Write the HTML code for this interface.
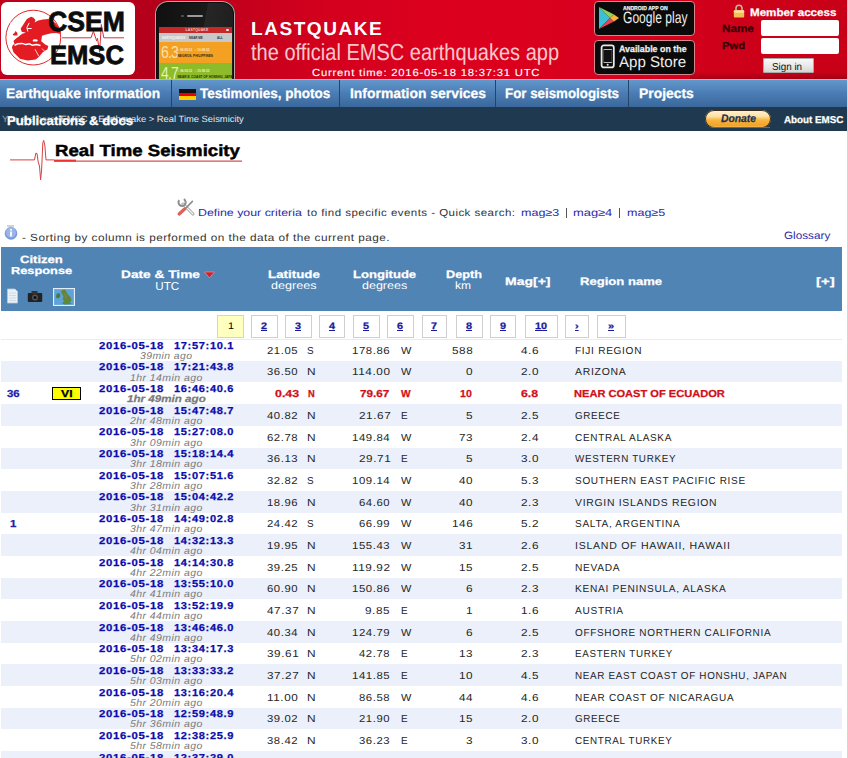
<!DOCTYPE html>
<html><head><meta charset="utf-8"><title>Real Time Seismicity</title>
<style>
html,body{margin:0;padding:0}
body{width:848px;height:758px;overflow:hidden;position:relative;background:#fff;font-family:"Liberation Sans",sans-serif}
.a{position:absolute}
.t{position:absolute;white-space:nowrap;line-height:normal;text-rendering:geometricPrecision;font-family:"Liberation Sans", sans-serif} .bm{display:inline-block;width:0;height:0}
#hdr{left:0;top:0;width:847px;height:79px;background:linear-gradient(to right,#c0001a 0px,#b4001a 150px,#c4001c 240px,#d4001e 330px,#dc001e 450px,#d8001e 600px,#cf001a 720px,#c80018 846px)}
#pinkline{left:0;top:79px;width:847px;height:1px;background:#e7a1aa}
#logo{left:1px;top:2px;width:134px;height:73px;background:#fff;border-radius:6px}
#nav{left:0;top:80px;width:847px;height:27px;background:linear-gradient(#6398cc,#4a7cb3 50%,#3a689c)}
.sep{top:80px;width:1px;height:27px;background:#22456c}
#bar{left:0;top:107px;width:847px;height:24px;background:#1f3a50}
#rborder{left:847px;top:0;width:1px;height:758px;background:linear-gradient(#efc4ca 0,#efc4ca 79px,#cdd6e2 79px)}
#thead{left:1px;top:247px;width:841px;height:64px;background:#5084b5}
.row{left:1px;width:841px;height:21.68px;background:#ebf0fa}
.pg{top:314.5px;height:22px;border:1px solid #cfcfcf;background:#fff;box-sizing:border-box;height:23.3px}
</style></head><body>
<div id="hdr" class="a"></div>
<div id="pinkline" class="a"></div>
<div class="a" style="left:690px;top:72px;width:157px;height:7px;background:linear-gradient(rgba(90,0,10,0),rgba(90,0,10,0.35))"></div>
<div id="logo" class="a"></div>
<svg class="a" style="left:0;top:0" width="848" height="80" viewBox="0 0 848 80">
  <circle cx="33.3" cy="37.6" r="27.4" fill="none" stroke="#e0262a" stroke-width="1"/>
  <path fill="#e31b23" d="M31.1,16.7 L33.5,17.8 L35.5,20 L34.5,22.5 L38.2,20.5 L43,19.5 L48,19.1 L52,20.5 L56,23.5 L59.4,28.6 L61,34 L56,33 L51.5,33.3 L46,34.5 L42,35.7 L41.2,41.2 L45.2,44.4 L48.3,46 L47.5,49.2 L42.8,52.3 L38.8,57.1 L35.7,59.5 L27.7,60.6 L19.8,58.7 L13.5,52.3 L11.9,47.6 L12.7,45.2 L14.5,43.8 L13.5,41.2 L14.1,40.3 L16,38.5 L18.8,36.5 L22.2,33.7 L25.9,32.8 L21.7,31.8 L20.7,28.5 L22.2,26.2 L26.9,19.1 Z"/>
  <path fill="#e31b23" d="M15.5,30.9 L17.4,33 L17.4,35.6 L13.5,35.5 L12.7,34.2 L14.5,33 Z"/>
  <path fill="none" stroke="#fff" stroke-width="1" d="M29.2,22.8 L26.9,27.6 L27.8,31.5 M27.2,28.5 L31.6,28.5"/>
  <path fill="none" stroke="#fff" stroke-width="1.5" stroke-linejoin="round" d="M14.5,45.2 L18,43.8 L22,43.4 L26,44.6 L29.5,43.8 L32.5,45.3 L36.5,44.6 L40.5,45.6"/>
  <ellipse cx="35.2" cy="40.4" rx="2.6" ry="1.2" fill="#fff"/>
  
  <path fill="none" stroke="#fff" stroke-width="0.8" d="M35,49.2 L38.8,56.3 M42,48.6 L44.6,51.2"/>
  <path fill="none" stroke="#fff" stroke-width="0.8" d="M9.5,22.5 L11,23.5"/>
  <polyline fill="none" stroke="#d6343a" stroke-width="1" points="62,37.8 91,37.8 93.4,31.2 96.7,41.1 97.5,38.2 99.6,52.3 101.3,24.5 103.8,37.8 124,37.8"/>
</svg>
<!-- phone -->
<div class="a" style="left:155px;top:1px;width:80px;height:90px;border-radius:13px;background:#0c0c0c;box-shadow:0 0 0 1px #b9a4a6 inset"></div>
<div class="a" style="left:157px;top:3px;width:76px;height:90px;border-radius:11px;background:linear-gradient(100deg,#101010 0%,#1a1a1a 55%,#262626 56%,#1c1c1c 100%)"></div>
<div class="a" style="left:187px;top:14.5px;width:15.5px;height:2.5px;border-radius:2px;background:#9a9a9a"></div>
<div class="a" style="left:181px;top:14.5px;width:2.5px;height:2.5px;border-radius:50%;background:#555"></div>
<div class="a" style="left:159px;top:26.5px;width:73px;height:52.5px;overflow:hidden;font-family:'Liberation Sans',sans-serif;white-space:nowrap">
<div class="a" style="left:0;top:0;width:73px;height:7px;background:#c42828"></div>
<div class="a" style="left:0;top:6.9px;width:73px;height:8.6px;background:#c8c8c8"></div>
<div class="a" style="left:0;top:15.5px;width:73px;height:21.2px;background:#f3a023"></div>
<div class="a" style="left:0;top:36.7px;width:73px;height:16px;background:#8dbb2a"></div>
<div class="a" style="left:26.5px;top:1.7px;font:bold 3.4px/4px 'Liberation Sans',sans-serif;color:#f3caca;letter-spacing:0.2px">LASTQUAKE</div>
<div class="a" style="left:67px;top:2.1px;width:2.6px;height:2.6px;border-radius:50%;background:#eee"></div>
<div class="a" style="left:3px;top:9px;font:bold 3px/4px 'Liberation Sans',sans-serif;color:#f4f4f4">EARTHQUAKES</div>
<div class="a" style="left:30px;top:9px;font:bold 3px/4px 'Liberation Sans',sans-serif;color:#333">NEAR ME</div>
<div class="a" style="left:58px;top:9px;font:bold 3px/4px 'Liberation Sans',sans-serif;color:#333">ALL</div>
<div class="a" style="left:1.8px;top:17px;font:16.5px/16px 'Liberation Sans',sans-serif;color:#fde8b8;letter-spacing:-1px;transform:scaleX(0.85);transform-origin:0 0;opacity:0.9">6.3</div>
<div class="a" style="left:18.5px;top:21.8px;font:bold 3px/4px 'Liberation Sans',sans-serif;color:#fde8c0">&#9675; 06:05:12 &nbsp; &#9675; 10:08:32</div>
<div class="a" style="left:18.5px;top:27.3px;font:bold 3.2px/4px 'Liberation Sans',sans-serif;color:#3a2408">NEGROS, PHILIPPINES</div>
<div class="a" style="left:1.8px;top:38px;font:16.5px/16px 'Liberation Sans',sans-serif;color:#eef9c8;letter-spacing:-1px;transform:scaleX(0.85);transform-origin:0 0;opacity:0.9">4.7</div>
<div class="a" style="left:18.5px;top:42.8px;font:bold 3px/4px 'Liberation Sans',sans-serif;color:#e8f4d0">&#9675; 06:05:12 &nbsp; &#9675; 10:08:32</div>
<div class="a" style="left:18.5px;top:48.3px;font:bold 3.2px/4px 'Liberation Sans',sans-serif;color:#283008">NEAR E. COAST OF HONSHU, JAPAN</div>
</div>
<div class="a" style="left:155px;top:79px;width:80px;height:1px;background:#e7a1aa"></div>
<!-- badges -->
<div class="a" style="left:594px;top:1px;width:99px;height:32.6px;border-radius:4px;background:#0a0a0a;border:1px solid #d7868e"></div>
<div class="a" style="left:594px;top:40px;width:99px;height:32.6px;border-radius:4px;background:#0a0a0a;border:1px solid #d7868e"></div>
<svg class="a" style="left:596px;top:5px" width="26" height="26" viewBox="0 0 26 26">
  <path d="M3,2 L14,13 L3,24 Z" fill="#3bc0d8"/>
  <path d="M3,2 L14,13 L18,9.5 Z" fill="#8fd25a"/>
  <path d="M3,24 L14,13 L18,16.5 Z" fill="#e2455a"/>
  <path d="M14,13 L18,9.5 L23,13 L18,16.5 Z" fill="#f6b53b"/>
</svg>
<svg class="a" style="left:600px;top:44px" width="16" height="25" viewBox="0 0 16 25">
  <rect x="1.6" y="1.4" width="12.2" height="22" rx="2.2" fill="none" stroke="#e8e8e8" stroke-width="1.8"/>
  <rect x="3.6" y="5" width="8.2" height="13.8" fill="#e8e8e8"/>
  <rect x="3.6" y="5.8" width="8.2" height="12.2" fill="#111"/>
  <circle cx="7.7" cy="20.8" r="1" fill="#e8e8e8"/>
</svg>
<!-- member access -->
<svg class="a" style="left:733px;top:4px" width="12" height="14" viewBox="0 0 12 14">
  <path d="M3,6.5 V4.2 A3,3 0 0 1 9,4.2 V6.5" fill="none" stroke="#c9b8a0" stroke-width="1.6"/>
  <rect x="0.8" y="6.2" width="10.4" height="7.2" rx="1" fill="#f2c055"/>
  <rect x="0.8" y="6.2" width="10.4" height="2.6" rx="1" fill="#fde39a"/>
</svg>
<div class="a" style="left:760.8px;top:20px;width:78px;height:15.8px;background:#fff;border-radius:2px"></div>
<div class="a" style="left:760.8px;top:38.4px;width:78px;height:15.7px;background:#fff;border-radius:2px"></div>
<div class="a" style="left:762.5px;top:57.7px;width:51px;height:15.2px;border-radius:2px;background:linear-gradient(#fafafa,#e6e6e6 60%,#d2d2d2);box-shadow:0 0 0 1px #a9a9a9 inset;box-sizing:border-box"></div>
<!-- nav -->
<div id="nav" class="a"></div>
<div class="a sep" style="left:170.5px"></div>
<div class="a sep" style="left:339px"></div>
<div class="a sep" style="left:495px"></div>
<div class="a sep" style="left:628px"></div>
<div class="a" style="left:179px;top:89.4px;width:16.5px;height:10.6px;background:linear-gradient(#111 0,#111 33.3%,#e4000f 33.3%,#e4000f 66.6%,#ffcc00 66.6%)"></div>
<div id="bar" class="a"></div>
<div class="a" style="left:705px;top:110px;width:66px;height:17.5px;border-radius:9px;background:linear-gradient(#fff3d6 0%,#ffe2a6 35%,#f8b640 55%,#f2a32a 85%,#f8c060 100%);box-shadow:0 0 0 1px #3a3020 inset"></div>
<div class="a" style="left:712px;top:127px;width:58px;height:1px;background:#6b6b66"></div>
<div id="rborder" class="a"></div>
<!-- title graph -->
<svg class="a" style="left:0;top:130px" width="260" height="60" viewBox="0 130 260 60">
  <polyline fill="none" stroke="#d84040" stroke-width="1" points="10,159.9 34.5,159.9 35.8,153.2 37,153.5 38.2,162 39.5,166 40.6,179.8 41.6,170 42.8,143 43.7,140.4 44.8,145 46,159.9 54,159.9"/>
  <line x1="54" y1="161.1" x2="242" y2="161.1" stroke="#c0282e" stroke-width="1"/>
  <line x1="54" y1="160.6" x2="76" y2="160.6" stroke="#e33" stroke-width="2"/>
</svg>
<!-- wrench icon -->
<svg class="a" style="left:177px;top:197px" width="18" height="20" viewBox="0 0 18 20">
  <path d="M6,7 L16,17" stroke="#9a9a9a" stroke-width="3" stroke-linecap="round"/>
  <path d="M6,7 L16,17" stroke="#f4f4f4" stroke-width="1.4" stroke-linecap="round"/>
  <path d="M2.2,3.2 A3.6,3.6 0 1 0 6.8,2.2" fill="none" stroke="#8d8d8d" stroke-width="2"/>
  <path d="M8,12 L15.4,4.4" stroke="#8a8a8a" stroke-width="1.6" stroke-linecap="round"/>
  <path d="M2.2,17 L7.6,12" stroke="#e0605a" stroke-width="3.2" stroke-linecap="round"/>
</svg>
<!-- info icon -->
<svg class="a" style="left:4px;top:225px" width="15" height="16" viewBox="0 0 15 16">
  <rect x="3" y="0.5" width="7" height="1" fill="#9aa"/>
  <circle cx="7" cy="8.4" r="6.3" fill="#7a9ad8"/>
  <circle cx="7" cy="7.6" r="5" fill="#9bb5ea"/>
  <rect x="6.1" y="6.5" width="1.8" height="5" fill="#fff"/>
  <circle cx="7" cy="4.8" r="1" fill="#fff"/>
</svg>
<div id="thead" class="a"></div>
<!-- header icons -->
<svg class="a" style="left:6px;top:288px" width="13" height="16" viewBox="0 0 13 16">
  <path d="M1.5,1 H9 L11.5,3.5 V15 H1.5 Z" fill="#e9f0f8" stroke="#b8c8d8" stroke-width="0.8"/>
  <path d="M3,5 H10 M3,7.5 H10 M3,10 H10 M3,12.5 H10" stroke="#c8d4e0" stroke-width="0.8"/>
</svg>
<svg class="a" style="left:27px;top:290px" width="16" height="13" viewBox="0 0 16 13">
  <rect x="0.8" y="3" width="14.4" height="9" rx="1" fill="#222"/>
  <rect x="4.5" y="1" width="6" height="3" fill="#333"/>
  <circle cx="8" cy="7.5" r="3" fill="#555"/>
  <circle cx="8" cy="7.5" r="1.6" fill="#111"/>
</svg>
<svg class="a" style="left:53px;top:288px" width="22" height="18" viewBox="0 0 22 18">
  <rect x="0.5" y="0.5" width="21" height="17" fill="#5fa3dd" stroke="#e6eef8" stroke-width="1.2"/>
  <path d="M9,2 L12,1.6 L13.5,4 L15,6.5 L17.5,9 L18.5,12 L17,14.5 L19,16 L12,16.4 L9,15.5 L11,13 L9.5,11 L10.5,8.5 L9,6 L8,4 Z" fill="#5c8a3a"/>
  <path d="M11,4 L13,6 L14.5,9 L13,11.5 L12,9 Z" fill="#8a7a48"/>
  <path d="M3.5,6 L6.5,5 L7.5,8 L5.5,10.5 L3,9.5 Z" fill="#4d7a38"/>
</svg>
<svg class="a" style="left:203px;top:271px" width="13" height="8" viewBox="0 0 13 8">
  <path d="M1.5,1 H11.5 L6.5,6.8 Z" fill="#d0202a" stroke="#e8a0b0" stroke-width="0.6"/>
</svg>
<!-- pagination -->
<div class="a pg" style="left:217.3px;width:26.4px;background:#ffffc0;border-color:#d8d8b0"></div>
<div class="a pg" style="left:251px;width:27px"></div>
<div class="a pg" style="left:285.2px;width:26.5px"></div>
<div class="a pg" style="left:319px;width:26.4px"></div>
<div class="a pg" style="left:353.2px;width:26.7px"></div>
<div class="a pg" style="left:386.9px;width:26.7px"></div>
<div class="a pg" style="left:422.2px;width:25.2px"></div>
<div class="a pg" style="left:456.1px;width:26.6px"></div>
<div class="a pg" style="left:490px;width:26.3px"></div>
<div class="a pg" style="left:524.5px;width:33.3px"></div>
<div class="a pg" style="left:565.1px;width:24.4px"></div>
<div class="a pg" style="left:597.1px;width:28.5px"></div>
<div class="a" style="left:1px;top:339px;width:841px;height:1px;background:#ececec"></div>
<div class="a row" style="top:360.78px"></div><div class="a row" style="top:404.14px"></div><div class="a row" style="top:447.50px"></div><div class="a row" style="top:490.86px"></div><div class="a row" style="top:534.22px"></div><div class="a row" style="top:577.58px"></div><div class="a row" style="top:620.94px"></div><div class="a row" style="top:664.30px"></div><div class="a row" style="top:707.66px"></div><div class="a row" style="top:751.02px"></div>
<div class="a" style="left:52px;top:387.1px;width:29px;height:12.7px;background:#ffff00;border:1px solid #000;box-sizing:border-box"></div>
<div class="a" style="left:566px;top:208px;width:1px;height:10px;background:#555"></div>
<div class="a" style="left:619px;top:208px;width:1px;height:10px;background:#555"></div>
<div id="t0" class="t" style="left:47.90px;top:5.50px;font-size:27.62px;font-weight:bold;font-style:normal;color:#0c0c0c;transform:scaleX(0.9633);transform-origin:0 0;-webkit-text-stroke:0.8px #0c0c0c">CSEM<span class="bm"></span></div><div id="t1" class="t" style="left:49.50px;top:39.60px;font-size:26.45px;font-weight:bold;font-style:normal;color:#0c0c0c;transform:scaleX(0.9675);transform-origin:0 0;-webkit-text-stroke:0.8px #0c0c0c">EMSC<span class="bm"></span></div><div id="t2" class="t" style="left:251.20px;top:17.90px;font-size:18.75px;font-weight:bold;font-style:normal;color:#fff;transform:scaleX(1.0163);transform-origin:0 0;letter-spacing:1.5px">LASTQUAKE<span class="bm"></span></div><div id="t3" class="t" style="left:251.20px;top:39.00px;font-size:23.26px;font-weight:normal;font-style:normal;color:rgba(255,236,236,0.86);transform:scaleX(0.8616);transform-origin:0 0;">the official EMSC earthquakes app<span class="bm"></span></div><div id="t4" class="t" style="left:312.20px;top:68.20px;font-size:10.17px;font-weight:normal;font-style:normal;color:#fff;transform:scaleX(1.1112);transform-origin:0 0;letter-spacing:0.7px;-webkit-text-stroke:0.1px #fff">Current time: 2016-05-18 18:37:31 UTC<span class="bm"></span></div><div id="t5" class="t" style="left:749.50px;top:7.00px;font-size:10.76px;font-weight:bold;font-style:normal;color:#fff;transform:scaleX(1.0787);transform-origin:0 0;-webkit-text-stroke:0.25px #fff;">Member access<span class="bm"></span></div><div id="t6" class="t" style="left:721.60px;top:24.20px;font-size:10.47px;font-weight:bold;font-style:normal;color:#360006;transform:scaleX(1.1138);transform-origin:0 0;-webkit-text-stroke:0.25px #360006;">Name<span class="bm"></span></div><div id="t7" class="t" style="left:721.60px;top:41.00px;font-size:10.17px;font-weight:bold;font-style:normal;color:#360006;transform:scaleX(1.1048);transform-origin:0 0;-webkit-text-stroke:0.25px #360006;">Pwd<span class="bm"></span></div><div id="t8" class="t" style="left:772.00px;top:61.50px;font-size:10.17px;font-weight:normal;font-style:normal;color:#111;transform:scaleX(0.9677);transform-origin:0 0;">Sign in<span class="bm"></span></div><div id="t9" class="t" style="left:623.20px;top:5.60px;font-size:5.67px;font-weight:bold;font-style:normal;color:#eee;transform:scaleX(0.9060);transform-origin:0 0;-webkit-text-stroke:0.25px #eee;">ANDROID APP ON<span class="bm"></span></div><div id="t10" class="t" style="left:623.20px;top:9.30px;font-size:16.42px;font-weight:normal;font-style:normal;color:#eee;transform:scaleX(0.7364);transform-origin:0 0;">Google play<span class="bm"></span></div><div id="t11" class="t" style="left:619.00px;top:44.40px;font-size:9.30px;font-weight:bold;font-style:normal;color:#eee;transform:scaleX(0.9521);transform-origin:0 0;-webkit-text-stroke:0.25px #eee;">Available on the<span class="bm"></span></div><div id="t12" class="t" style="left:619.00px;top:53.50px;font-size:15.41px;font-weight:normal;font-style:normal;color:#eee;transform:scaleX(0.9797);transform-origin:0 0;">App Store<span class="bm"></span></div><div id="t13" class="t" style="left:6.40px;top:84.80px;font-size:13.81px;font-weight:bold;font-style:normal;color:#fff;transform:scaleX(0.9955);transform-origin:0 0;-webkit-text-stroke:0.25px #fff;">Earthquake information<span class="bm"></span></div><div id="t14" class="t" style="left:199.60px;top:84.80px;font-size:13.81px;font-weight:bold;font-style:normal;color:#fff;transform:scaleX(0.9789);transform-origin:0 0;-webkit-text-stroke:0.25px #fff;">Testimonies, photos<span class="bm"></span></div><div id="t15" class="t" style="left:349.70px;top:84.80px;font-size:13.81px;font-weight:bold;font-style:normal;color:#fff;transform:scaleX(1.0074);transform-origin:0 0;-webkit-text-stroke:0.25px #fff;">Information services<span class="bm"></span></div><div id="t16" class="t" style="left:504.90px;top:84.80px;font-size:13.81px;font-weight:bold;font-style:normal;color:#fff;transform:scaleX(0.9653);transform-origin:0 0;-webkit-text-stroke:0.25px #fff;">For seismologists<span class="bm"></span></div><div id="t17" class="t" style="left:638.60px;top:84.80px;font-size:13.81px;font-weight:bold;font-style:normal;color:#fff;transform:scaleX(1.0056);transform-origin:0 0;-webkit-text-stroke:0.25px #fff;">Projects<span class="bm"></span></div><div id="t18" class="t" style="left:1.70px;top:114.20px;font-size:9.01px;font-weight:normal;font-style:normal;color:#e4e8ee;transform:scaleX(1.0408);transform-origin:0 0;"><span style="color:#9aa4ae">You are here:</span> EMSC &gt; Earthquake &gt; Real Time Seismicity<span class="bm"></span></div><div id="t19" class="t" style="left:7.40px;top:113.60px;font-size:12.65px;font-weight:bold;font-style:normal;color:#fff;transform:scaleX(1.0438);transform-origin:0 0;-webkit-text-stroke:0.25px #fff;">Publications &amp; docs<span class="bm"></span></div><div id="t20" class="t" style="left:721.20px;top:113.00px;font-size:10.90px;font-weight:bold;font-style:italic;color:#1d3356;transform:scaleX(0.9486);transform-origin:0 0;-webkit-text-stroke:0.25px #1d3356;">Donate<span class="bm"></span></div><div id="t21" class="t" style="left:783.80px;top:115.00px;font-size:9.88px;font-weight:bold;font-style:normal;color:#fff;transform:scaleX(0.9917);transform-origin:0 0;-webkit-text-stroke:0.25px #fff;">About EMSC<span class="bm"></span></div><div id="t22" class="t" style="left:55.20px;top:142.40px;font-size:16.13px;font-weight:bold;font-style:normal;color:#000;transform:scaleX(1.1559);transform-origin:0 0;-webkit-text-stroke:0.45px #000">Real Time Seismicity<span class="bm"></span></div><div id="t23" class="t" style="left:197.70px;top:208.00px;font-size:10.17px;font-weight:normal;font-style:normal;color:#2b2ba8;transform:scaleX(1.2176);transform-origin:0 0;">Define your criteria<span class="bm"></span></div><div id="t24" class="t" style="left:306.80px;top:208.00px;font-size:10.17px;font-weight:normal;font-style:normal;color:#333;transform:scaleX(1.1339);transform-origin:0 0;letter-spacing:0.4px">to find specific events - Quick search:<span class="bm"></span></div><div id="t25" class="t" style="left:521.20px;top:208.00px;font-size:10.17px;font-weight:normal;font-style:normal;color:#2b2ba8;transform:scaleX(1.2323);transform-origin:0 0;">mag≥3<span class="bm"></span></div><div id="t26" class="t" style="left:573.20px;top:208.00px;font-size:10.17px;font-weight:normal;font-style:normal;color:#2b2ba8;transform:scaleX(1.2677);transform-origin:0 0;">mag≥4<span class="bm"></span></div><div id="t27" class="t" style="left:626.90px;top:208.00px;font-size:10.17px;font-weight:normal;font-style:normal;color:#2b2ba8;transform:scaleX(1.2323);transform-origin:0 0;">mag≥5<span class="bm"></span></div><div id="t28" class="t" style="left:22.30px;top:233.10px;font-size:10.32px;font-weight:normal;font-style:normal;color:#333;transform:scaleX(1.1436);transform-origin:0 0;letter-spacing:0.4px">- Sorting by column is performed on the data of the current page.<span class="bm"></span></div><div id="t29" class="t" style="left:784.30px;top:230.00px;font-size:10.61px;font-weight:normal;font-style:normal;color:#2b2ba8;transform:scaleX(1.1048);transform-origin:0 0;">Glossary<span class="bm"></span></div><div id="t30" class="t" style="left:19.50px;top:254.70px;font-size:10.47px;font-weight:bold;font-style:normal;color:#fff;transform:scaleX(1.2457);transform-origin:0 0;-webkit-text-stroke:0.25px #fff;">Citizen<span class="bm"></span></div><div id="t31" class="t" style="left:10.60px;top:265.90px;font-size:10.03px;font-weight:bold;font-style:normal;color:#fff;transform:scaleX(1.2771);transform-origin:0 0;-webkit-text-stroke:0.25px #fff;">Response<span class="bm"></span></div><div id="t32" class="t" style="left:120.60px;top:268.70px;font-size:10.90px;font-weight:bold;font-style:normal;color:#fff;transform:scaleX(1.2587);transform-origin:0 0;-webkit-text-stroke:0.25px #fff;">Date &amp; Time<span class="bm"></span></div><div id="t33" class="t" style="left:155.30px;top:280.00px;font-size:11.63px;font-weight:normal;font-style:normal;color:#fff;">UTC<span class="bm"></span></div><div id="t34" class="t" style="left:267.60px;top:268.70px;font-size:10.76px;font-weight:bold;font-style:normal;color:#fff;transform:scaleX(1.2405);transform-origin:0 0;-webkit-text-stroke:0.25px #fff;">Latitude<span class="bm"></span></div><div id="t35" class="t" style="left:271.40px;top:280.10px;font-size:10.76px;font-weight:normal;font-style:normal;color:#fff;transform:scaleX(1.1692);transform-origin:0 0;">degrees<span class="bm"></span></div><div id="t36" class="t" style="left:352.80px;top:268.70px;font-size:10.76px;font-weight:bold;font-style:normal;color:#fff;transform:scaleX(1.2154);transform-origin:0 0;-webkit-text-stroke:0.25px #fff;">Longitude<span class="bm"></span></div><div id="t37" class="t" style="left:361.70px;top:280.10px;font-size:10.76px;font-weight:normal;font-style:normal;color:#fff;transform:scaleX(1.1615);transform-origin:0 0;">degrees<span class="bm"></span></div><div id="t38" class="t" style="left:445.80px;top:268.70px;font-size:10.76px;font-weight:bold;font-style:normal;color:#fff;transform:scaleX(1.1806);transform-origin:0 0;-webkit-text-stroke:0.25px #fff;">Depth<span class="bm"></span></div><div id="t39" class="t" style="left:455.30px;top:280.10px;font-size:10.76px;font-weight:normal;font-style:normal;color:#fff;transform:scaleX(1.1200);transform-origin:0 0;">km<span class="bm"></span></div><div id="t40" class="t" style="left:504.80px;top:275.60px;font-size:10.76px;font-weight:bold;font-style:normal;color:#fff;transform:scaleX(1.3029);transform-origin:0 0;-webkit-text-stroke:0.25px #fff;">Mag[+]<span class="bm"></span></div><div id="t41" class="t" style="left:579.50px;top:275.60px;font-size:10.76px;font-weight:bold;font-style:normal;color:#fff;transform:scaleX(1.2162);transform-origin:0 0;-webkit-text-stroke:0.25px #fff;">Region name<span class="bm"></span></div><div id="t42" class="t" style="left:815.90px;top:275.60px;font-size:10.76px;font-weight:bold;font-style:normal;color:#fff;transform:scaleX(1.3857);transform-origin:0 0;-webkit-text-stroke:0.25px #fff;">[+]<span class="bm"></span></div><div id="t43" class="t" style="left:227.62px;top:320.80px;font-size:9.45px;font-weight:normal;font-style:normal;color:#000;transform:scaleX(1.1500);transform-origin:0 0;">1<span class="bm"></span></div><div id="t44" class="t" style="left:261.05px;top:320.80px;font-size:9.45px;font-weight:bold;font-style:normal;color:#1a1a9e;transform:scaleX(1.1500);transform-origin:0 0;-webkit-text-stroke:0.25px #1a1a9e;text-decoration:underline">2<span class="bm"></span></div><div id="t45" class="t" style="left:294.95px;top:320.80px;font-size:9.45px;font-weight:bold;font-style:normal;color:#1a1a9e;transform:scaleX(1.1500);transform-origin:0 0;-webkit-text-stroke:0.25px #1a1a9e;text-decoration:underline">3<span class="bm"></span></div><div id="t46" class="t" style="left:328.75px;top:320.80px;font-size:9.45px;font-weight:bold;font-style:normal;color:#1a1a9e;transform:scaleX(1.1500);transform-origin:0 0;-webkit-text-stroke:0.25px #1a1a9e;text-decoration:underline">4<span class="bm"></span></div><div id="t47" class="t" style="left:363.05px;top:320.80px;font-size:9.45px;font-weight:bold;font-style:normal;color:#1a1a9e;transform:scaleX(1.1500);transform-origin:0 0;-webkit-text-stroke:0.25px #1a1a9e;text-decoration:underline">5<span class="bm"></span></div><div id="t48" class="t" style="left:396.75px;top:320.80px;font-size:9.45px;font-weight:bold;font-style:normal;color:#1a1a9e;transform:scaleX(1.1500);transform-origin:0 0;-webkit-text-stroke:0.25px #1a1a9e;text-decoration:underline">6<span class="bm"></span></div><div id="t49" class="t" style="left:431.35px;top:320.80px;font-size:9.45px;font-weight:bold;font-style:normal;color:#1a1a9e;transform:scaleX(1.1500);transform-origin:0 0;-webkit-text-stroke:0.25px #1a1a9e;text-decoration:underline">7<span class="bm"></span></div><div id="t50" class="t" style="left:465.95px;top:320.80px;font-size:9.45px;font-weight:bold;font-style:normal;color:#1a1a9e;transform:scaleX(1.1500);transform-origin:0 0;-webkit-text-stroke:0.25px #1a1a9e;text-decoration:underline">8<span class="bm"></span></div><div id="t51" class="t" style="left:499.65px;top:320.80px;font-size:9.45px;font-weight:bold;font-style:normal;color:#1a1a9e;transform:scaleX(1.1500);transform-origin:0 0;-webkit-text-stroke:0.25px #1a1a9e;text-decoration:underline">9<span class="bm"></span></div><div id="t52" class="t" style="left:534.77px;top:320.80px;font-size:9.45px;font-weight:bold;font-style:normal;color:#1a1a9e;transform:scaleX(1.1500);transform-origin:0 0;-webkit-text-stroke:0.25px #1a1a9e;text-decoration:underline">10<span class="bm"></span></div><div id="t53" class="t" style="left:575.00px;top:320.80px;font-size:9.45px;font-weight:bold;font-style:normal;color:#1a1a9e;transform:scaleX(1.1500);transform-origin:0 0;-webkit-text-stroke:0.25px #1a1a9e;text-decoration:underline">›<span class="bm"></span></div><div id="t54" class="t" style="left:607.85px;top:320.80px;font-size:9.45px;font-weight:bold;font-style:normal;color:#1a1a9e;transform:scaleX(1.1500);transform-origin:0 0;-webkit-text-stroke:0.25px #1a1a9e;text-decoration:underline">»<span class="bm"></span></div><div id="t55" class="t" style="left:99.00px;top:340.70px;font-size:10.03px;font-weight:bold;font-style:normal;color:#0c0cac;transform:scaleX(1.1351);transform-origin:0 0;-webkit-text-stroke:0.25px #0c0cac;letter-spacing:0.6px">2016-05-18<span class="bm"></span></div><div id="t56" class="t" style="left:173.80px;top:340.70px;font-size:10.03px;font-weight:bold;font-style:normal;color:#0c0cac;transform:scaleX(1.1037);transform-origin:0 0;-webkit-text-stroke:0.25px #0c0cac;letter-spacing:0.6px">17:57:10.1<span class="bm"></span></div><div id="t57" class="t" style="left:140.15px;top:350.90px;font-size:9.88px;font-weight:normal;font-style:italic;color:#7a7a7a;transform:scaleX(1.0541);transform-origin:0 0;letter-spacing:0.4px">39min ago<span class="bm"></span></div><div id="t58" class="t" style="left:267.23px;top:345.80px;font-size:10.17px;font-weight:normal;font-style:normal;color:#262626;transform:scaleX(1.1134);transform-origin:0 0;letter-spacing:0.5px">21.05<span class="bm"></span></div><div id="t59" class="t" style="left:307.30px;top:345.80px;font-size:10.17px;font-weight:normal;font-style:normal;color:#262626;transform:scaleX(0.9810);transform-origin:0 0;">S<span class="bm"></span></div><div id="t60" class="t" style="left:351.55px;top:345.80px;font-size:10.17px;font-weight:normal;font-style:normal;color:#262626;transform:scaleX(1.1221);transform-origin:0 0;letter-spacing:0.5px">178.86<span class="bm"></span></div><div id="t61" class="t" style="left:401.10px;top:345.80px;font-size:10.17px;font-weight:normal;font-style:normal;color:#262626;transform:scaleX(1.0791);transform-origin:0 0;">W<span class="bm"></span></div><div id="t62" class="t" style="left:451.98px;top:345.80px;font-size:10.17px;font-weight:normal;font-style:normal;color:#262626;transform:scaleX(1.1566);transform-origin:0 0;letter-spacing:0.5px">588<span class="bm"></span></div><div id="t63" class="t" style="left:520.90px;top:345.80px;font-size:10.17px;font-weight:normal;font-style:normal;color:#262626;transform:scaleX(1.1554);transform-origin:0 0;letter-spacing:0.5px">4.6<span class="bm"></span></div><div id="t64" class="t" style="left:575.20px;top:345.80px;font-size:10.17px;font-weight:normal;font-style:normal;color:#262626;transform:scaleX(0.9950);transform-origin:0 0;letter-spacing:0.7px">FIJI REGION<span class="bm"></span></div><div id="t65" class="t" style="left:99.00px;top:362.38px;font-size:10.03px;font-weight:bold;font-style:normal;color:#0c0cac;transform:scaleX(1.1351);transform-origin:0 0;-webkit-text-stroke:0.25px #0c0cac;letter-spacing:0.6px">2016-05-18<span class="bm"></span></div><div id="t66" class="t" style="left:173.80px;top:362.38px;font-size:10.03px;font-weight:bold;font-style:normal;color:#0c0cac;transform:scaleX(1.1037);transform-origin:0 0;-webkit-text-stroke:0.25px #0c0cac;letter-spacing:0.6px">17:21:43.8<span class="bm"></span></div><div id="t67" class="t" style="left:130.33px;top:372.58px;font-size:9.88px;font-weight:normal;font-style:italic;color:#7a7a7a;transform:scaleX(1.0639);transform-origin:0 0;letter-spacing:0.4px">1hr 14min ago<span class="bm"></span></div><div id="t68" class="t" style="left:267.23px;top:367.48px;font-size:10.17px;font-weight:normal;font-style:normal;color:#262626;transform:scaleX(1.1134);transform-origin:0 0;letter-spacing:0.5px">36.50<span class="bm"></span></div><div id="t69" class="t" style="left:307.30px;top:367.48px;font-size:10.17px;font-weight:normal;font-style:normal;color:#262626;transform:scaleX(1.1679);transform-origin:0 0;">N<span class="bm"></span></div><div id="t70" class="t" style="left:351.55px;top:367.48px;font-size:10.17px;font-weight:normal;font-style:normal;color:#262626;transform:scaleX(1.1561);transform-origin:0 0;letter-spacing:0.5px">114.00<span class="bm"></span></div><div id="t71" class="t" style="left:401.10px;top:367.48px;font-size:10.17px;font-weight:normal;font-style:normal;color:#262626;transform:scaleX(1.0791);transform-origin:0 0;">W<span class="bm"></span></div><div id="t72" class="t" style="left:465.82px;top:367.48px;font-size:10.17px;font-weight:normal;font-style:normal;color:#262626;transform:scaleX(1.1627);transform-origin:0 0;letter-spacing:0.5px">0<span class="bm"></span></div><div id="t73" class="t" style="left:520.90px;top:367.48px;font-size:10.17px;font-weight:normal;font-style:normal;color:#262626;transform:scaleX(1.1554);transform-origin:0 0;letter-spacing:0.5px">2.0<span class="bm"></span></div><div id="t74" class="t" style="left:575.20px;top:367.48px;font-size:10.17px;font-weight:normal;font-style:normal;color:#262626;transform:scaleX(1.0306);transform-origin:0 0;letter-spacing:0.7px">ARIZONA<span class="bm"></span></div><div id="t75" class="t" style="left:99.00px;top:384.06px;font-size:10.03px;font-weight:bold;font-style:normal;color:#0c0cac;transform:scaleX(1.1351);transform-origin:0 0;-webkit-text-stroke:0.25px #0c0cac;letter-spacing:0.6px">2016-05-18<span class="bm"></span></div><div id="t76" class="t" style="left:173.80px;top:384.06px;font-size:10.03px;font-weight:bold;font-style:normal;color:#0c0cac;transform:scaleX(1.1037);transform-origin:0 0;-webkit-text-stroke:0.25px #0c0cac;letter-spacing:0.6px">16:46:40.6<span class="bm"></span></div><div id="t77" class="t" style="left:126.90px;top:394.26px;font-size:9.88px;font-weight:bold;font-style:italic;color:#7a7a7a;transform:scaleX(1.1761);transform-origin:0 0;-webkit-text-stroke:0.25px #7a7a7a;">1hr 49min ago<span class="bm"></span></div><div id="t78" class="t" style="left:6.56px;top:389.16px;font-size:10.17px;font-weight:bold;font-style:normal;color:#2020a8;transform:scaleX(1.1236);transform-origin:0 0;-webkit-text-stroke:0.25px #2020a8;">36<span class="bm"></span></div><div id="t79" class="t" style="left:60.50px;top:388.66px;font-size:10.17px;font-weight:bold;font-style:normal;color:#000;transform:scaleX(1.2000);transform-origin:0 0;-webkit-text-stroke:0.25px #000;">VI<span class="bm"></span></div><div id="t80" class="t" style="left:275.00px;top:389.16px;font-size:10.17px;font-weight:bold;font-style:normal;color:#d0101a;transform:scaleX(1.2200);transform-origin:0 0;-webkit-text-stroke:0.25px #d0101a;">0.43<span class="bm"></span></div><div id="t81" class="t" style="left:308.32px;top:389.16px;font-size:10.17px;font-weight:bold;font-style:normal;color:#d0101a;transform:scaleX(0.9200);transform-origin:0 0;-webkit-text-stroke:0.25px #d0101a;">N<span class="bm"></span></div><div id="t82" class="t" style="left:359.90px;top:389.16px;font-size:10.17px;font-weight:bold;font-style:normal;color:#d0101a;transform:scaleX(1.1462);transform-origin:0 0;-webkit-text-stroke:0.25px #d0101a;">79.67<span class="bm"></span></div><div id="t83" class="t" style="left:400.90px;top:389.16px;font-size:10.17px;font-weight:bold;font-style:normal;color:#d0101a;-webkit-text-stroke:0.25px #d0101a;">W<span class="bm"></span></div><div id="t84" class="t" style="left:459.70px;top:389.16px;font-size:10.17px;font-weight:bold;font-style:normal;color:#d0101a;transform:scaleX(1.0417);transform-origin:0 0;-webkit-text-stroke:0.25px #d0101a;">10<span class="bm"></span></div><div id="t85" class="t" style="left:521.20px;top:389.16px;font-size:10.17px;font-weight:bold;font-style:normal;color:#d0101a;transform:scaleX(1.2143);transform-origin:0 0;-webkit-text-stroke:0.25px #d0101a;">6.8<span class="bm"></span></div><div id="t86" class="t" style="left:574.20px;top:389.16px;font-size:10.17px;font-weight:bold;font-style:normal;color:#d0101a;transform:scaleX(1.0914);transform-origin:0 0;-webkit-text-stroke:0.25px #d0101a;">NEAR COAST OF ECUADOR<span class="bm"></span></div><div id="t87" class="t" style="left:99.00px;top:405.74px;font-size:10.03px;font-weight:bold;font-style:normal;color:#0c0cac;transform:scaleX(1.1351);transform-origin:0 0;-webkit-text-stroke:0.25px #0c0cac;letter-spacing:0.6px">2016-05-18<span class="bm"></span></div><div id="t88" class="t" style="left:173.80px;top:405.74px;font-size:10.03px;font-weight:bold;font-style:normal;color:#0c0cac;transform:scaleX(1.1037);transform-origin:0 0;-webkit-text-stroke:0.25px #0c0cac;letter-spacing:0.6px">15:47:48.7<span class="bm"></span></div><div id="t89" class="t" style="left:130.33px;top:415.94px;font-size:9.88px;font-weight:normal;font-style:italic;color:#7a7a7a;transform:scaleX(1.0639);transform-origin:0 0;letter-spacing:0.4px">2hr 48min ago<span class="bm"></span></div><div id="t90" class="t" style="left:267.23px;top:410.84px;font-size:10.17px;font-weight:normal;font-style:normal;color:#262626;transform:scaleX(1.1134);transform-origin:0 0;letter-spacing:0.5px">40.82<span class="bm"></span></div><div id="t91" class="t" style="left:307.30px;top:410.84px;font-size:10.17px;font-weight:normal;font-style:normal;color:#262626;transform:scaleX(1.1679);transform-origin:0 0;">N<span class="bm"></span></div><div id="t92" class="t" style="left:358.53px;top:410.84px;font-size:10.17px;font-weight:normal;font-style:normal;color:#262626;transform:scaleX(1.1546);transform-origin:0 0;letter-spacing:0.5px">21.67<span class="bm"></span></div><div id="t93" class="t" style="left:401.10px;top:410.84px;font-size:10.17px;font-weight:normal;font-style:normal;color:#262626;transform:scaleX(0.9810);transform-origin:0 0;">E<span class="bm"></span></div><div id="t94" class="t" style="left:465.82px;top:410.84px;font-size:10.17px;font-weight:normal;font-style:normal;color:#262626;transform:scaleX(1.1627);transform-origin:0 0;letter-spacing:0.5px">5<span class="bm"></span></div><div id="t95" class="t" style="left:520.90px;top:410.84px;font-size:10.17px;font-weight:normal;font-style:normal;color:#262626;transform:scaleX(1.1554);transform-origin:0 0;letter-spacing:0.5px">2.5<span class="bm"></span></div><div id="t96" class="t" style="left:575.20px;top:410.84px;font-size:10.17px;font-weight:normal;font-style:normal;color:#262626;transform:scaleX(0.9665);transform-origin:0 0;letter-spacing:0.7px">GREECE<span class="bm"></span></div><div id="t97" class="t" style="left:99.00px;top:427.42px;font-size:10.03px;font-weight:bold;font-style:normal;color:#0c0cac;transform:scaleX(1.1351);transform-origin:0 0;-webkit-text-stroke:0.25px #0c0cac;letter-spacing:0.6px">2016-05-18<span class="bm"></span></div><div id="t98" class="t" style="left:173.80px;top:427.42px;font-size:10.03px;font-weight:bold;font-style:normal;color:#0c0cac;transform:scaleX(1.1037);transform-origin:0 0;-webkit-text-stroke:0.25px #0c0cac;letter-spacing:0.6px">15:27:08.0<span class="bm"></span></div><div id="t99" class="t" style="left:130.33px;top:437.62px;font-size:9.88px;font-weight:normal;font-style:italic;color:#7a7a7a;transform:scaleX(1.0639);transform-origin:0 0;letter-spacing:0.4px">3hr 09min ago<span class="bm"></span></div><div id="t100" class="t" style="left:267.23px;top:432.52px;font-size:10.17px;font-weight:normal;font-style:normal;color:#262626;transform:scaleX(1.1134);transform-origin:0 0;letter-spacing:0.5px">62.78<span class="bm"></span></div><div id="t101" class="t" style="left:307.30px;top:432.52px;font-size:10.17px;font-weight:normal;font-style:normal;color:#262626;transform:scaleX(1.1679);transform-origin:0 0;">N<span class="bm"></span></div><div id="t102" class="t" style="left:351.55px;top:432.52px;font-size:10.17px;font-weight:normal;font-style:normal;color:#262626;transform:scaleX(1.1221);transform-origin:0 0;letter-spacing:0.5px">149.84<span class="bm"></span></div><div id="t103" class="t" style="left:401.10px;top:432.52px;font-size:10.17px;font-weight:normal;font-style:normal;color:#262626;transform:scaleX(1.0791);transform-origin:0 0;">W<span class="bm"></span></div><div id="t104" class="t" style="left:458.96px;top:432.52px;font-size:10.17px;font-weight:normal;font-style:normal;color:#262626;transform:scaleX(1.1536);transform-origin:0 0;letter-spacing:0.5px">73<span class="bm"></span></div><div id="t105" class="t" style="left:520.90px;top:432.52px;font-size:10.17px;font-weight:normal;font-style:normal;color:#262626;transform:scaleX(1.1554);transform-origin:0 0;letter-spacing:0.5px">2.4<span class="bm"></span></div><div id="t106" class="t" style="left:575.20px;top:432.52px;font-size:10.17px;font-weight:normal;font-style:normal;color:#262626;transform:scaleX(0.9844);transform-origin:0 0;letter-spacing:0.7px">CENTRAL ALASKA<span class="bm"></span></div><div id="t107" class="t" style="left:99.00px;top:449.10px;font-size:10.03px;font-weight:bold;font-style:normal;color:#0c0cac;transform:scaleX(1.1351);transform-origin:0 0;-webkit-text-stroke:0.25px #0c0cac;letter-spacing:0.6px">2016-05-18<span class="bm"></span></div><div id="t108" class="t" style="left:173.80px;top:449.10px;font-size:10.03px;font-weight:bold;font-style:normal;color:#0c0cac;transform:scaleX(1.1037);transform-origin:0 0;-webkit-text-stroke:0.25px #0c0cac;letter-spacing:0.6px">15:18:14.4<span class="bm"></span></div><div id="t109" class="t" style="left:130.33px;top:459.30px;font-size:9.88px;font-weight:normal;font-style:italic;color:#7a7a7a;transform:scaleX(1.0639);transform-origin:0 0;letter-spacing:0.4px">3hr 18min ago<span class="bm"></span></div><div id="t110" class="t" style="left:267.23px;top:454.20px;font-size:10.17px;font-weight:normal;font-style:normal;color:#262626;transform:scaleX(1.1134);transform-origin:0 0;letter-spacing:0.5px">36.13<span class="bm"></span></div><div id="t111" class="t" style="left:307.30px;top:454.20px;font-size:10.17px;font-weight:normal;font-style:normal;color:#262626;transform:scaleX(1.1679);transform-origin:0 0;">N<span class="bm"></span></div><div id="t112" class="t" style="left:358.53px;top:454.20px;font-size:10.17px;font-weight:normal;font-style:normal;color:#262626;transform:scaleX(1.1546);transform-origin:0 0;letter-spacing:0.5px">29.71<span class="bm"></span></div><div id="t113" class="t" style="left:401.10px;top:454.20px;font-size:10.17px;font-weight:normal;font-style:normal;color:#262626;transform:scaleX(0.9810);transform-origin:0 0;">E<span class="bm"></span></div><div id="t114" class="t" style="left:465.82px;top:454.20px;font-size:10.17px;font-weight:normal;font-style:normal;color:#262626;transform:scaleX(1.1627);transform-origin:0 0;letter-spacing:0.5px">5<span class="bm"></span></div><div id="t115" class="t" style="left:520.90px;top:454.20px;font-size:10.17px;font-weight:normal;font-style:normal;color:#262626;transform:scaleX(1.1554);transform-origin:0 0;letter-spacing:0.5px">3.0<span class="bm"></span></div><div id="t116" class="t" style="left:575.20px;top:454.20px;font-size:10.17px;font-weight:normal;font-style:normal;color:#262626;transform:scaleX(0.9687);transform-origin:0 0;letter-spacing:0.7px">WESTERN TURKEY<span class="bm"></span></div><div id="t117" class="t" style="left:99.00px;top:470.78px;font-size:10.03px;font-weight:bold;font-style:normal;color:#0c0cac;transform:scaleX(1.1351);transform-origin:0 0;-webkit-text-stroke:0.25px #0c0cac;letter-spacing:0.6px">2016-05-18<span class="bm"></span></div><div id="t118" class="t" style="left:173.80px;top:470.78px;font-size:10.03px;font-weight:bold;font-style:normal;color:#0c0cac;transform:scaleX(1.1037);transform-origin:0 0;-webkit-text-stroke:0.25px #0c0cac;letter-spacing:0.6px">15:07:51.6<span class="bm"></span></div><div id="t119" class="t" style="left:130.33px;top:480.98px;font-size:9.88px;font-weight:normal;font-style:italic;color:#7a7a7a;transform:scaleX(1.0639);transform-origin:0 0;letter-spacing:0.4px">3hr 28min ago<span class="bm"></span></div><div id="t120" class="t" style="left:267.23px;top:475.88px;font-size:10.17px;font-weight:normal;font-style:normal;color:#262626;transform:scaleX(1.1134);transform-origin:0 0;letter-spacing:0.5px">32.82<span class="bm"></span></div><div id="t121" class="t" style="left:307.30px;top:475.88px;font-size:10.17px;font-weight:normal;font-style:normal;color:#262626;transform:scaleX(0.9810);transform-origin:0 0;">S<span class="bm"></span></div><div id="t122" class="t" style="left:351.55px;top:475.88px;font-size:10.17px;font-weight:normal;font-style:normal;color:#262626;transform:scaleX(1.1221);transform-origin:0 0;letter-spacing:0.5px">109.14<span class="bm"></span></div><div id="t123" class="t" style="left:401.10px;top:475.88px;font-size:10.17px;font-weight:normal;font-style:normal;color:#262626;transform:scaleX(1.0791);transform-origin:0 0;">W<span class="bm"></span></div><div id="t124" class="t" style="left:458.96px;top:475.88px;font-size:10.17px;font-weight:normal;font-style:normal;color:#262626;transform:scaleX(1.1536);transform-origin:0 0;letter-spacing:0.5px">40<span class="bm"></span></div><div id="t125" class="t" style="left:520.90px;top:475.88px;font-size:10.17px;font-weight:normal;font-style:normal;color:#262626;transform:scaleX(1.1554);transform-origin:0 0;letter-spacing:0.5px">5.3<span class="bm"></span></div><div id="t126" class="t" style="left:575.20px;top:475.88px;font-size:10.17px;font-weight:normal;font-style:normal;color:#262626;transform:scaleX(0.9873);transform-origin:0 0;letter-spacing:0.7px">SOUTHERN EAST PACIFIC RISE<span class="bm"></span></div><div id="t127" class="t" style="left:99.00px;top:492.46px;font-size:10.03px;font-weight:bold;font-style:normal;color:#0c0cac;transform:scaleX(1.1351);transform-origin:0 0;-webkit-text-stroke:0.25px #0c0cac;letter-spacing:0.6px">2016-05-18<span class="bm"></span></div><div id="t128" class="t" style="left:173.80px;top:492.46px;font-size:10.03px;font-weight:bold;font-style:normal;color:#0c0cac;transform:scaleX(1.1037);transform-origin:0 0;-webkit-text-stroke:0.25px #0c0cac;letter-spacing:0.6px">15:04:42.2<span class="bm"></span></div><div id="t129" class="t" style="left:130.33px;top:502.66px;font-size:9.88px;font-weight:normal;font-style:italic;color:#7a7a7a;transform:scaleX(1.0639);transform-origin:0 0;letter-spacing:0.4px">3hr 31min ago<span class="bm"></span></div><div id="t130" class="t" style="left:267.23px;top:497.56px;font-size:10.17px;font-weight:normal;font-style:normal;color:#262626;transform:scaleX(1.1134);transform-origin:0 0;letter-spacing:0.5px">18.96<span class="bm"></span></div><div id="t131" class="t" style="left:307.30px;top:497.56px;font-size:10.17px;font-weight:normal;font-style:normal;color:#262626;transform:scaleX(1.1679);transform-origin:0 0;">N<span class="bm"></span></div><div id="t132" class="t" style="left:358.53px;top:497.56px;font-size:10.17px;font-weight:normal;font-style:normal;color:#262626;transform:scaleX(1.1134);transform-origin:0 0;letter-spacing:0.5px">64.60<span class="bm"></span></div><div id="t133" class="t" style="left:401.10px;top:497.56px;font-size:10.17px;font-weight:normal;font-style:normal;color:#262626;transform:scaleX(1.0791);transform-origin:0 0;">W<span class="bm"></span></div><div id="t134" class="t" style="left:458.96px;top:497.56px;font-size:10.17px;font-weight:normal;font-style:normal;color:#262626;transform:scaleX(1.1536);transform-origin:0 0;letter-spacing:0.5px">40<span class="bm"></span></div><div id="t135" class="t" style="left:520.90px;top:497.56px;font-size:10.17px;font-weight:normal;font-style:normal;color:#262626;transform:scaleX(1.1554);transform-origin:0 0;letter-spacing:0.5px">2.3<span class="bm"></span></div><div id="t136" class="t" style="left:575.20px;top:497.56px;font-size:10.17px;font-weight:normal;font-style:normal;color:#262626;transform:scaleX(1.0247);transform-origin:0 0;letter-spacing:0.7px">VIRGIN ISLANDS REGION<span class="bm"></span></div><div id="t137" class="t" style="left:99.00px;top:514.14px;font-size:10.03px;font-weight:bold;font-style:normal;color:#0c0cac;transform:scaleX(1.1351);transform-origin:0 0;-webkit-text-stroke:0.25px #0c0cac;letter-spacing:0.6px">2016-05-18<span class="bm"></span></div><div id="t138" class="t" style="left:173.80px;top:514.14px;font-size:10.03px;font-weight:bold;font-style:normal;color:#0c0cac;transform:scaleX(1.1037);transform-origin:0 0;-webkit-text-stroke:0.25px #0c0cac;letter-spacing:0.6px">14:49:02.8<span class="bm"></span></div><div id="t139" class="t" style="left:130.33px;top:524.34px;font-size:9.88px;font-weight:normal;font-style:italic;color:#7a7a7a;transform:scaleX(1.0639);transform-origin:0 0;letter-spacing:0.4px">3hr 47min ago<span class="bm"></span></div><div id="t140" class="t" style="left:9.91px;top:519.24px;font-size:10.17px;font-weight:bold;font-style:normal;color:#2020a8;transform:scaleX(1.1317);transform-origin:0 0;-webkit-text-stroke:0.25px #2020a8;">1<span class="bm"></span></div><div id="t141" class="t" style="left:267.23px;top:519.24px;font-size:10.17px;font-weight:normal;font-style:normal;color:#262626;transform:scaleX(1.1134);transform-origin:0 0;letter-spacing:0.5px">24.42<span class="bm"></span></div><div id="t142" class="t" style="left:307.30px;top:519.24px;font-size:10.17px;font-weight:normal;font-style:normal;color:#262626;transform:scaleX(0.9810);transform-origin:0 0;">S<span class="bm"></span></div><div id="t143" class="t" style="left:358.53px;top:519.24px;font-size:10.17px;font-weight:normal;font-style:normal;color:#262626;transform:scaleX(1.1134);transform-origin:0 0;letter-spacing:0.5px">66.99<span class="bm"></span></div><div id="t144" class="t" style="left:401.10px;top:519.24px;font-size:10.17px;font-weight:normal;font-style:normal;color:#262626;transform:scaleX(1.0791);transform-origin:0 0;">W<span class="bm"></span></div><div id="t145" class="t" style="left:451.98px;top:519.24px;font-size:10.17px;font-weight:normal;font-style:normal;color:#262626;transform:scaleX(1.1566);transform-origin:0 0;letter-spacing:0.5px">146<span class="bm"></span></div><div id="t146" class="t" style="left:520.90px;top:519.24px;font-size:10.17px;font-weight:normal;font-style:normal;color:#262626;transform:scaleX(1.1554);transform-origin:0 0;letter-spacing:0.5px">5.2<span class="bm"></span></div><div id="t147" class="t" style="left:575.20px;top:519.24px;font-size:10.17px;font-weight:normal;font-style:normal;color:#262626;transform:scaleX(0.9923);transform-origin:0 0;letter-spacing:0.7px">SALTA, ARGENTINA<span class="bm"></span></div><div id="t148" class="t" style="left:99.00px;top:535.82px;font-size:10.03px;font-weight:bold;font-style:normal;color:#0c0cac;transform:scaleX(1.1351);transform-origin:0 0;-webkit-text-stroke:0.25px #0c0cac;letter-spacing:0.6px">2016-05-18<span class="bm"></span></div><div id="t149" class="t" style="left:173.80px;top:535.82px;font-size:10.03px;font-weight:bold;font-style:normal;color:#0c0cac;transform:scaleX(1.1037);transform-origin:0 0;-webkit-text-stroke:0.25px #0c0cac;letter-spacing:0.6px">14:32:13.3<span class="bm"></span></div><div id="t150" class="t" style="left:130.33px;top:546.02px;font-size:9.88px;font-weight:normal;font-style:italic;color:#7a7a7a;transform:scaleX(1.0639);transform-origin:0 0;letter-spacing:0.4px">4hr 04min ago<span class="bm"></span></div><div id="t151" class="t" style="left:267.23px;top:540.92px;font-size:10.17px;font-weight:normal;font-style:normal;color:#262626;transform:scaleX(1.1134);transform-origin:0 0;letter-spacing:0.5px">19.95<span class="bm"></span></div><div id="t152" class="t" style="left:307.30px;top:540.92px;font-size:10.17px;font-weight:normal;font-style:normal;color:#262626;transform:scaleX(1.1679);transform-origin:0 0;">N<span class="bm"></span></div><div id="t153" class="t" style="left:351.55px;top:540.92px;font-size:10.17px;font-weight:normal;font-style:normal;color:#262626;transform:scaleX(1.1221);transform-origin:0 0;letter-spacing:0.5px">155.43<span class="bm"></span></div><div id="t154" class="t" style="left:401.10px;top:540.92px;font-size:10.17px;font-weight:normal;font-style:normal;color:#262626;transform:scaleX(1.0791);transform-origin:0 0;">W<span class="bm"></span></div><div id="t155" class="t" style="left:458.96px;top:540.92px;font-size:10.17px;font-weight:normal;font-style:normal;color:#262626;transform:scaleX(1.1536);transform-origin:0 0;letter-spacing:0.5px">31<span class="bm"></span></div><div id="t156" class="t" style="left:520.90px;top:540.92px;font-size:10.17px;font-weight:normal;font-style:normal;color:#262626;transform:scaleX(1.1554);transform-origin:0 0;letter-spacing:0.5px">2.6<span class="bm"></span></div><div id="t157" class="t" style="left:575.20px;top:540.92px;font-size:10.17px;font-weight:normal;font-style:normal;color:#262626;transform:scaleX(1.0399);transform-origin:0 0;letter-spacing:0.7px">ISLAND OF HAWAII, HAWAII<span class="bm"></span></div><div id="t158" class="t" style="left:99.00px;top:557.50px;font-size:10.03px;font-weight:bold;font-style:normal;color:#0c0cac;transform:scaleX(1.1351);transform-origin:0 0;-webkit-text-stroke:0.25px #0c0cac;letter-spacing:0.6px">2016-05-18<span class="bm"></span></div><div id="t159" class="t" style="left:173.80px;top:557.50px;font-size:10.03px;font-weight:bold;font-style:normal;color:#0c0cac;transform:scaleX(1.1037);transform-origin:0 0;-webkit-text-stroke:0.25px #0c0cac;letter-spacing:0.6px">14:14:30.8<span class="bm"></span></div><div id="t160" class="t" style="left:130.33px;top:567.70px;font-size:9.88px;font-weight:normal;font-style:italic;color:#7a7a7a;transform:scaleX(1.0639);transform-origin:0 0;letter-spacing:0.4px">4hr 22min ago<span class="bm"></span></div><div id="t161" class="t" style="left:267.23px;top:562.60px;font-size:10.17px;font-weight:normal;font-style:normal;color:#262626;transform:scaleX(1.1134);transform-origin:0 0;letter-spacing:0.5px">39.25<span class="bm"></span></div><div id="t162" class="t" style="left:307.30px;top:562.60px;font-size:10.17px;font-weight:normal;font-style:normal;color:#262626;transform:scaleX(1.1679);transform-origin:0 0;">N<span class="bm"></span></div><div id="t163" class="t" style="left:351.55px;top:562.60px;font-size:10.17px;font-weight:normal;font-style:normal;color:#262626;transform:scaleX(1.1561);transform-origin:0 0;letter-spacing:0.5px">119.92<span class="bm"></span></div><div id="t164" class="t" style="left:401.10px;top:562.60px;font-size:10.17px;font-weight:normal;font-style:normal;color:#262626;transform:scaleX(1.0791);transform-origin:0 0;">W<span class="bm"></span></div><div id="t165" class="t" style="left:458.96px;top:562.60px;font-size:10.17px;font-weight:normal;font-style:normal;color:#262626;transform:scaleX(1.1536);transform-origin:0 0;letter-spacing:0.5px">15<span class="bm"></span></div><div id="t166" class="t" style="left:520.90px;top:562.60px;font-size:10.17px;font-weight:normal;font-style:normal;color:#262626;transform:scaleX(1.1554);transform-origin:0 0;letter-spacing:0.5px">2.5<span class="bm"></span></div><div id="t167" class="t" style="left:575.20px;top:562.60px;font-size:10.17px;font-weight:normal;font-style:normal;color:#262626;transform:scaleX(1.0025);transform-origin:0 0;letter-spacing:0.7px">NEVADA<span class="bm"></span></div><div id="t168" class="t" style="left:99.00px;top:579.18px;font-size:10.03px;font-weight:bold;font-style:normal;color:#0c0cac;transform:scaleX(1.1351);transform-origin:0 0;-webkit-text-stroke:0.25px #0c0cac;letter-spacing:0.6px">2016-05-18<span class="bm"></span></div><div id="t169" class="t" style="left:173.80px;top:579.18px;font-size:10.03px;font-weight:bold;font-style:normal;color:#0c0cac;transform:scaleX(1.1037);transform-origin:0 0;-webkit-text-stroke:0.25px #0c0cac;letter-spacing:0.6px">13:55:10.0<span class="bm"></span></div><div id="t170" class="t" style="left:130.33px;top:589.38px;font-size:9.88px;font-weight:normal;font-style:italic;color:#7a7a7a;transform:scaleX(1.0639);transform-origin:0 0;letter-spacing:0.4px">4hr 41min ago<span class="bm"></span></div><div id="t171" class="t" style="left:267.23px;top:584.28px;font-size:10.17px;font-weight:normal;font-style:normal;color:#262626;transform:scaleX(1.1134);transform-origin:0 0;letter-spacing:0.5px">60.90<span class="bm"></span></div><div id="t172" class="t" style="left:307.30px;top:584.28px;font-size:10.17px;font-weight:normal;font-style:normal;color:#262626;transform:scaleX(1.1679);transform-origin:0 0;">N<span class="bm"></span></div><div id="t173" class="t" style="left:351.55px;top:584.28px;font-size:10.17px;font-weight:normal;font-style:normal;color:#262626;transform:scaleX(1.1221);transform-origin:0 0;letter-spacing:0.5px">150.86<span class="bm"></span></div><div id="t174" class="t" style="left:401.10px;top:584.28px;font-size:10.17px;font-weight:normal;font-style:normal;color:#262626;transform:scaleX(1.0791);transform-origin:0 0;">W<span class="bm"></span></div><div id="t175" class="t" style="left:465.82px;top:584.28px;font-size:10.17px;font-weight:normal;font-style:normal;color:#262626;transform:scaleX(1.1627);transform-origin:0 0;letter-spacing:0.5px">6<span class="bm"></span></div><div id="t176" class="t" style="left:520.90px;top:584.28px;font-size:10.17px;font-weight:normal;font-style:normal;color:#262626;transform:scaleX(1.1554);transform-origin:0 0;letter-spacing:0.5px">2.3<span class="bm"></span></div><div id="t177" class="t" style="left:575.20px;top:584.28px;font-size:10.17px;font-weight:normal;font-style:normal;color:#262626;transform:scaleX(0.9994);transform-origin:0 0;letter-spacing:0.7px">KENAI PENINSULA, ALASKA<span class="bm"></span></div><div id="t178" class="t" style="left:99.00px;top:600.86px;font-size:10.03px;font-weight:bold;font-style:normal;color:#0c0cac;transform:scaleX(1.1351);transform-origin:0 0;-webkit-text-stroke:0.25px #0c0cac;letter-spacing:0.6px">2016-05-18<span class="bm"></span></div><div id="t179" class="t" style="left:173.80px;top:600.86px;font-size:10.03px;font-weight:bold;font-style:normal;color:#0c0cac;transform:scaleX(1.1037);transform-origin:0 0;-webkit-text-stroke:0.25px #0c0cac;letter-spacing:0.6px">13:52:19.9<span class="bm"></span></div><div id="t180" class="t" style="left:130.33px;top:611.06px;font-size:9.88px;font-weight:normal;font-style:italic;color:#7a7a7a;transform:scaleX(1.0639);transform-origin:0 0;letter-spacing:0.4px">4hr 44min ago<span class="bm"></span></div><div id="t181" class="t" style="left:267.23px;top:605.96px;font-size:10.17px;font-weight:normal;font-style:normal;color:#262626;transform:scaleX(1.1546);transform-origin:0 0;letter-spacing:0.5px">47.37<span class="bm"></span></div><div id="t182" class="t" style="left:307.30px;top:605.96px;font-size:10.17px;font-weight:normal;font-style:normal;color:#262626;transform:scaleX(1.1679);transform-origin:0 0;">N<span class="bm"></span></div><div id="t183" class="t" style="left:365.39px;top:605.96px;font-size:10.17px;font-weight:normal;font-style:normal;color:#262626;transform:scaleX(1.1575);transform-origin:0 0;letter-spacing:0.5px">9.85<span class="bm"></span></div><div id="t184" class="t" style="left:401.10px;top:605.96px;font-size:10.17px;font-weight:normal;font-style:normal;color:#262626;transform:scaleX(0.9810);transform-origin:0 0;">E<span class="bm"></span></div><div id="t185" class="t" style="left:465.82px;top:605.96px;font-size:10.17px;font-weight:normal;font-style:normal;color:#262626;transform:scaleX(1.1627);transform-origin:0 0;letter-spacing:0.5px">1<span class="bm"></span></div><div id="t186" class="t" style="left:520.90px;top:605.96px;font-size:10.17px;font-weight:normal;font-style:normal;color:#262626;transform:scaleX(1.1554);transform-origin:0 0;letter-spacing:0.5px">1.6<span class="bm"></span></div><div id="t187" class="t" style="left:575.20px;top:605.96px;font-size:10.17px;font-weight:normal;font-style:normal;color:#262626;transform:scaleX(0.9980);transform-origin:0 0;letter-spacing:0.7px">AUSTRIA<span class="bm"></span></div><div id="t188" class="t" style="left:99.00px;top:622.54px;font-size:10.03px;font-weight:bold;font-style:normal;color:#0c0cac;transform:scaleX(1.1351);transform-origin:0 0;-webkit-text-stroke:0.25px #0c0cac;letter-spacing:0.6px">2016-05-18<span class="bm"></span></div><div id="t189" class="t" style="left:173.80px;top:622.54px;font-size:10.03px;font-weight:bold;font-style:normal;color:#0c0cac;transform:scaleX(1.1037);transform-origin:0 0;-webkit-text-stroke:0.25px #0c0cac;letter-spacing:0.6px">13:46:46.0<span class="bm"></span></div><div id="t190" class="t" style="left:130.33px;top:632.74px;font-size:9.88px;font-weight:normal;font-style:italic;color:#7a7a7a;transform:scaleX(1.0639);transform-origin:0 0;letter-spacing:0.4px">4hr 49min ago<span class="bm"></span></div><div id="t191" class="t" style="left:267.23px;top:627.64px;font-size:10.17px;font-weight:normal;font-style:normal;color:#262626;transform:scaleX(1.1134);transform-origin:0 0;letter-spacing:0.5px">40.34<span class="bm"></span></div><div id="t192" class="t" style="left:307.30px;top:627.64px;font-size:10.17px;font-weight:normal;font-style:normal;color:#262626;transform:scaleX(1.1679);transform-origin:0 0;">N<span class="bm"></span></div><div id="t193" class="t" style="left:351.55px;top:627.64px;font-size:10.17px;font-weight:normal;font-style:normal;color:#262626;transform:scaleX(1.1221);transform-origin:0 0;letter-spacing:0.5px">124.79<span class="bm"></span></div><div id="t194" class="t" style="left:401.10px;top:627.64px;font-size:10.17px;font-weight:normal;font-style:normal;color:#262626;transform:scaleX(1.0791);transform-origin:0 0;">W<span class="bm"></span></div><div id="t195" class="t" style="left:465.82px;top:627.64px;font-size:10.17px;font-weight:normal;font-style:normal;color:#262626;transform:scaleX(1.1627);transform-origin:0 0;letter-spacing:0.5px">6<span class="bm"></span></div><div id="t196" class="t" style="left:520.90px;top:627.64px;font-size:10.17px;font-weight:normal;font-style:normal;color:#262626;transform:scaleX(1.1554);transform-origin:0 0;letter-spacing:0.5px">2.5<span class="bm"></span></div><div id="t197" class="t" style="left:575.20px;top:627.64px;font-size:10.17px;font-weight:normal;font-style:normal;color:#262626;transform:scaleX(0.9812);transform-origin:0 0;letter-spacing:0.7px">OFFSHORE NORTHERN CALIFORNIA<span class="bm"></span></div><div id="t198" class="t" style="left:99.00px;top:644.22px;font-size:10.03px;font-weight:bold;font-style:normal;color:#0c0cac;transform:scaleX(1.1351);transform-origin:0 0;-webkit-text-stroke:0.25px #0c0cac;letter-spacing:0.6px">2016-05-18<span class="bm"></span></div><div id="t199" class="t" style="left:173.80px;top:644.22px;font-size:10.03px;font-weight:bold;font-style:normal;color:#0c0cac;transform:scaleX(1.1037);transform-origin:0 0;-webkit-text-stroke:0.25px #0c0cac;letter-spacing:0.6px">13:34:17.3<span class="bm"></span></div><div id="t200" class="t" style="left:130.33px;top:654.42px;font-size:9.88px;font-weight:normal;font-style:italic;color:#7a7a7a;transform:scaleX(1.0639);transform-origin:0 0;letter-spacing:0.4px">5hr 02min ago<span class="bm"></span></div><div id="t201" class="t" style="left:267.23px;top:649.32px;font-size:10.17px;font-weight:normal;font-style:normal;color:#262626;transform:scaleX(1.1546);transform-origin:0 0;letter-spacing:0.5px">39.61<span class="bm"></span></div><div id="t202" class="t" style="left:307.30px;top:649.32px;font-size:10.17px;font-weight:normal;font-style:normal;color:#262626;transform:scaleX(1.1679);transform-origin:0 0;">N<span class="bm"></span></div><div id="t203" class="t" style="left:358.53px;top:649.32px;font-size:10.17px;font-weight:normal;font-style:normal;color:#262626;transform:scaleX(1.1134);transform-origin:0 0;letter-spacing:0.5px">42.78<span class="bm"></span></div><div id="t204" class="t" style="left:401.10px;top:649.32px;font-size:10.17px;font-weight:normal;font-style:normal;color:#262626;transform:scaleX(0.9810);transform-origin:0 0;">E<span class="bm"></span></div><div id="t205" class="t" style="left:458.96px;top:649.32px;font-size:10.17px;font-weight:normal;font-style:normal;color:#262626;transform:scaleX(1.1536);transform-origin:0 0;letter-spacing:0.5px">13<span class="bm"></span></div><div id="t206" class="t" style="left:520.90px;top:649.32px;font-size:10.17px;font-weight:normal;font-style:normal;color:#262626;transform:scaleX(1.1554);transform-origin:0 0;letter-spacing:0.5px">2.3<span class="bm"></span></div><div id="t207" class="t" style="left:575.20px;top:649.32px;font-size:10.17px;font-weight:normal;font-style:normal;color:#262626;transform:scaleX(0.9649);transform-origin:0 0;letter-spacing:0.7px">EASTERN TURKEY<span class="bm"></span></div><div id="t208" class="t" style="left:99.00px;top:665.90px;font-size:10.03px;font-weight:bold;font-style:normal;color:#0c0cac;transform:scaleX(1.1351);transform-origin:0 0;-webkit-text-stroke:0.25px #0c0cac;letter-spacing:0.6px">2016-05-18<span class="bm"></span></div><div id="t209" class="t" style="left:173.80px;top:665.90px;font-size:10.03px;font-weight:bold;font-style:normal;color:#0c0cac;transform:scaleX(1.1037);transform-origin:0 0;-webkit-text-stroke:0.25px #0c0cac;letter-spacing:0.6px">13:33:33.2<span class="bm"></span></div><div id="t210" class="t" style="left:130.33px;top:676.10px;font-size:9.88px;font-weight:normal;font-style:italic;color:#7a7a7a;transform:scaleX(1.0639);transform-origin:0 0;letter-spacing:0.4px">5hr 03min ago<span class="bm"></span></div><div id="t211" class="t" style="left:267.23px;top:671.00px;font-size:10.17px;font-weight:normal;font-style:normal;color:#262626;transform:scaleX(1.1546);transform-origin:0 0;letter-spacing:0.5px">37.27<span class="bm"></span></div><div id="t212" class="t" style="left:307.30px;top:671.00px;font-size:10.17px;font-weight:normal;font-style:normal;color:#262626;transform:scaleX(1.1679);transform-origin:0 0;">N<span class="bm"></span></div><div id="t213" class="t" style="left:351.55px;top:671.00px;font-size:10.17px;font-weight:normal;font-style:normal;color:#262626;transform:scaleX(1.1221);transform-origin:0 0;letter-spacing:0.5px">141.85<span class="bm"></span></div><div id="t214" class="t" style="left:401.10px;top:671.00px;font-size:10.17px;font-weight:normal;font-style:normal;color:#262626;transform:scaleX(0.9810);transform-origin:0 0;">E<span class="bm"></span></div><div id="t215" class="t" style="left:458.96px;top:671.00px;font-size:10.17px;font-weight:normal;font-style:normal;color:#262626;transform:scaleX(1.1536);transform-origin:0 0;letter-spacing:0.5px">10<span class="bm"></span></div><div id="t216" class="t" style="left:520.90px;top:671.00px;font-size:10.17px;font-weight:normal;font-style:normal;color:#262626;transform:scaleX(1.1554);transform-origin:0 0;letter-spacing:0.5px">4.5<span class="bm"></span></div><div id="t217" class="t" style="left:575.20px;top:671.00px;font-size:10.17px;font-weight:normal;font-style:normal;color:#262626;transform:scaleX(0.9709);transform-origin:0 0;letter-spacing:0.7px">NEAR EAST COAST OF HONSHU, JAPAN<span class="bm"></span></div><div id="t218" class="t" style="left:99.00px;top:687.58px;font-size:10.03px;font-weight:bold;font-style:normal;color:#0c0cac;transform:scaleX(1.1351);transform-origin:0 0;-webkit-text-stroke:0.25px #0c0cac;letter-spacing:0.6px">2016-05-18<span class="bm"></span></div><div id="t219" class="t" style="left:173.80px;top:687.58px;font-size:10.03px;font-weight:bold;font-style:normal;color:#0c0cac;transform:scaleX(1.1037);transform-origin:0 0;-webkit-text-stroke:0.25px #0c0cac;letter-spacing:0.6px">13:16:20.4<span class="bm"></span></div><div id="t220" class="t" style="left:130.33px;top:697.78px;font-size:9.88px;font-weight:normal;font-style:italic;color:#7a7a7a;transform:scaleX(1.0639);transform-origin:0 0;letter-spacing:0.4px">5hr 20min ago<span class="bm"></span></div><div id="t221" class="t" style="left:267.23px;top:692.68px;font-size:10.17px;font-weight:normal;font-style:normal;color:#262626;transform:scaleX(1.1546);transform-origin:0 0;letter-spacing:0.5px">11.00<span class="bm"></span></div><div id="t222" class="t" style="left:307.30px;top:692.68px;font-size:10.17px;font-weight:normal;font-style:normal;color:#262626;transform:scaleX(1.1679);transform-origin:0 0;">N<span class="bm"></span></div><div id="t223" class="t" style="left:358.53px;top:692.68px;font-size:10.17px;font-weight:normal;font-style:normal;color:#262626;transform:scaleX(1.1134);transform-origin:0 0;letter-spacing:0.5px">86.58<span class="bm"></span></div><div id="t224" class="t" style="left:401.10px;top:692.68px;font-size:10.17px;font-weight:normal;font-style:normal;color:#262626;transform:scaleX(1.0791);transform-origin:0 0;">W<span class="bm"></span></div><div id="t225" class="t" style="left:458.96px;top:692.68px;font-size:10.17px;font-weight:normal;font-style:normal;color:#262626;transform:scaleX(1.1536);transform-origin:0 0;letter-spacing:0.5px">44<span class="bm"></span></div><div id="t226" class="t" style="left:520.90px;top:692.68px;font-size:10.17px;font-weight:normal;font-style:normal;color:#262626;transform:scaleX(1.1554);transform-origin:0 0;letter-spacing:0.5px">4.6<span class="bm"></span></div><div id="t227" class="t" style="left:575.20px;top:692.68px;font-size:10.17px;font-weight:normal;font-style:normal;color:#262626;transform:scaleX(0.9825);transform-origin:0 0;letter-spacing:0.7px">NEAR COAST OF NICARAGUA<span class="bm"></span></div><div id="t228" class="t" style="left:99.00px;top:709.26px;font-size:10.03px;font-weight:bold;font-style:normal;color:#0c0cac;transform:scaleX(1.1351);transform-origin:0 0;-webkit-text-stroke:0.25px #0c0cac;letter-spacing:0.6px">2016-05-18<span class="bm"></span></div><div id="t229" class="t" style="left:173.80px;top:709.26px;font-size:10.03px;font-weight:bold;font-style:normal;color:#0c0cac;transform:scaleX(1.1037);transform-origin:0 0;-webkit-text-stroke:0.25px #0c0cac;letter-spacing:0.6px">12:59:48.9<span class="bm"></span></div><div id="t230" class="t" style="left:130.33px;top:719.46px;font-size:9.88px;font-weight:normal;font-style:italic;color:#7a7a7a;transform:scaleX(1.0639);transform-origin:0 0;letter-spacing:0.4px">5hr 36min ago<span class="bm"></span></div><div id="t231" class="t" style="left:267.23px;top:714.36px;font-size:10.17px;font-weight:normal;font-style:normal;color:#262626;transform:scaleX(1.1134);transform-origin:0 0;letter-spacing:0.5px">39.02<span class="bm"></span></div><div id="t232" class="t" style="left:307.30px;top:714.36px;font-size:10.17px;font-weight:normal;font-style:normal;color:#262626;transform:scaleX(1.1679);transform-origin:0 0;">N<span class="bm"></span></div><div id="t233" class="t" style="left:358.53px;top:714.36px;font-size:10.17px;font-weight:normal;font-style:normal;color:#262626;transform:scaleX(1.1134);transform-origin:0 0;letter-spacing:0.5px">21.90<span class="bm"></span></div><div id="t234" class="t" style="left:401.10px;top:714.36px;font-size:10.17px;font-weight:normal;font-style:normal;color:#262626;transform:scaleX(0.9810);transform-origin:0 0;">E<span class="bm"></span></div><div id="t235" class="t" style="left:458.96px;top:714.36px;font-size:10.17px;font-weight:normal;font-style:normal;color:#262626;transform:scaleX(1.1536);transform-origin:0 0;letter-spacing:0.5px">15<span class="bm"></span></div><div id="t236" class="t" style="left:520.90px;top:714.36px;font-size:10.17px;font-weight:normal;font-style:normal;color:#262626;transform:scaleX(1.1554);transform-origin:0 0;letter-spacing:0.5px">2.0<span class="bm"></span></div><div id="t237" class="t" style="left:575.20px;top:714.36px;font-size:10.17px;font-weight:normal;font-style:normal;color:#262626;transform:scaleX(0.9665);transform-origin:0 0;letter-spacing:0.7px">GREECE<span class="bm"></span></div><div id="t238" class="t" style="left:99.00px;top:730.94px;font-size:10.03px;font-weight:bold;font-style:normal;color:#0c0cac;transform:scaleX(1.1351);transform-origin:0 0;-webkit-text-stroke:0.25px #0c0cac;letter-spacing:0.6px">2016-05-18<span class="bm"></span></div><div id="t239" class="t" style="left:173.80px;top:730.94px;font-size:10.03px;font-weight:bold;font-style:normal;color:#0c0cac;transform:scaleX(1.1037);transform-origin:0 0;-webkit-text-stroke:0.25px #0c0cac;letter-spacing:0.6px">12:38:25.9<span class="bm"></span></div><div id="t240" class="t" style="left:130.33px;top:741.14px;font-size:9.88px;font-weight:normal;font-style:italic;color:#7a7a7a;transform:scaleX(1.0639);transform-origin:0 0;letter-spacing:0.4px">5hr 58min ago<span class="bm"></span></div><div id="t241" class="t" style="left:267.23px;top:736.04px;font-size:10.17px;font-weight:normal;font-style:normal;color:#262626;transform:scaleX(1.1134);transform-origin:0 0;letter-spacing:0.5px">38.42<span class="bm"></span></div><div id="t242" class="t" style="left:307.30px;top:736.04px;font-size:10.17px;font-weight:normal;font-style:normal;color:#262626;transform:scaleX(1.1679);transform-origin:0 0;">N<span class="bm"></span></div><div id="t243" class="t" style="left:358.53px;top:736.04px;font-size:10.17px;font-weight:normal;font-style:normal;color:#262626;transform:scaleX(1.1134);transform-origin:0 0;letter-spacing:0.5px">36.23<span class="bm"></span></div><div id="t244" class="t" style="left:401.10px;top:736.04px;font-size:10.17px;font-weight:normal;font-style:normal;color:#262626;transform:scaleX(0.9810);transform-origin:0 0;">E<span class="bm"></span></div><div id="t245" class="t" style="left:465.82px;top:736.04px;font-size:10.17px;font-weight:normal;font-style:normal;color:#262626;transform:scaleX(1.1627);transform-origin:0 0;letter-spacing:0.5px">3<span class="bm"></span></div><div id="t246" class="t" style="left:520.90px;top:736.04px;font-size:10.17px;font-weight:normal;font-style:normal;color:#262626;transform:scaleX(1.1554);transform-origin:0 0;letter-spacing:0.5px">3.0<span class="bm"></span></div><div id="t247" class="t" style="left:575.20px;top:736.04px;font-size:10.17px;font-weight:normal;font-style:normal;color:#262626;transform:scaleX(0.9691);transform-origin:0 0;letter-spacing:0.7px">CENTRAL TURKEY<span class="bm"></span></div><div id="t248" class="t" style="left:99.00px;top:752.62px;font-size:10.03px;font-weight:bold;font-style:normal;color:#0c0cac;transform:scaleX(1.1351);transform-origin:0 0;-webkit-text-stroke:0.25px #0c0cac;letter-spacing:0.6px">2016-05-18<span class="bm"></span></div><div id="t249" class="t" style="left:173.80px;top:752.62px;font-size:10.03px;font-weight:bold;font-style:normal;color:#0c0cac;transform:scaleX(1.1037);transform-origin:0 0;-webkit-text-stroke:0.25px #0c0cac;letter-spacing:0.6px">12:37:29.0<span class="bm"></span></div><div id="t250" class="t" style="left:130.33px;top:762.82px;font-size:9.88px;font-weight:normal;font-style:italic;color:#7a7a7a;transform:scaleX(1.0639);transform-origin:0 0;letter-spacing:0.4px">5hr 59min ago<span class="bm"></span></div>
</body></html>
